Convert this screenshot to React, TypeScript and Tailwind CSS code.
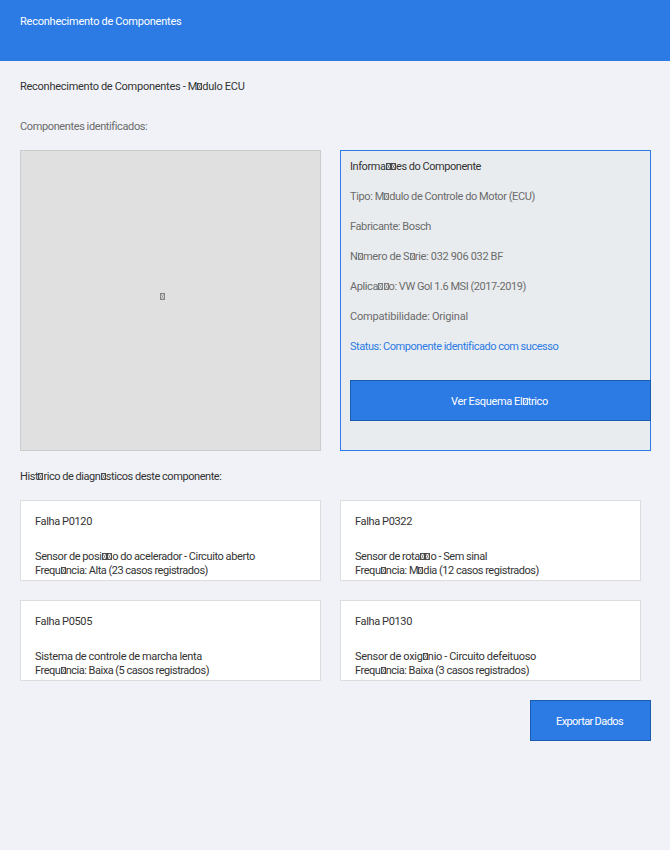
import { useLayoutEffect, useRef, useState } from "react";

// Placeholder box for a character the font has no glyph for.
function Tofu() {
  return (
    <svg width="5" height="7" viewBox="0 0 5 7" className="ml-[0.3px] inline-block align-baseline opacity-90" aria-hidden="true">
      <rect x="0.5" y="0.5" width="4" height="6" fill="none" stroke="currentColor" strokeWidth="0.95" />
      <path d="M1 1L4 6M4 1L1 6" stroke="currentColor" strokeWidth="0.75" opacity="0.8" />
    </svg>
  );
}

// One line of text whose tracking is adjusted to fill the given width.
function Line({ text, width, className = "" }: { text: string; width: number; className?: string }) {
  const ref = useRef<HTMLSpanElement>(null);
  const [tracking, setTracking] = useState(0);
  useLayoutEffect(() => {
    const letters = text.replaceAll("□", "").length;
    if (ref.current && letters > 0) {
      const natural = ref.current.getBoundingClientRect().width;
      setTracking((width - natural) / letters);
    }
  }, [text, width]);
  const parts = text.split("□");
  return (
    <div className={`h-[14px] whitespace-nowrap leading-[14px] ${className}`}>
      <span ref={ref} className="inline-block [word-spacing:-0.2px]" style={{ letterSpacing: `${tracking}px` }}>
        {parts.map((part, i) => (
          <span key={i}>
            {i > 0 && <Tofu />}
            {part}
          </span>
        ))}
      </span>
    </div>
  );
}

const details = [
  { text: "Tipo: M□dulo de Controle do Motor (ECU)", width: 185 },
  { text: "Fabricante: Bosch", width: 81 },
  { text: "N□mero de S□rie: 032 906 032 BF", width: 153 },
  { text: "Aplica□□o: VW Gol 1.6 MSI (2017-2019)", width: 176 },
  { text: "Compatibilidade: Original", width: 118 },
];

const faults = [
  { code: "Falha P0120", text: "Sensor de posi□□o do acelerador - Circuito aberto", w: 220, freq: "Frequ□ncia: Alta (23 casos registrados)", fw: 173 },
  { code: "Falha P0322", text: "Sensor de rota□□o - Sem sinal", w: 132, freq: "Frequ□ncia: M□dia (12 casos registrados)", fw: 184 },
  { code: "Falha P0505", text: "Sistema de controle de marcha lenta", w: 167, freq: "Frequ□ncia: Baixa (5 casos registrados)", fw: 174 },
  { code: "Falha P0130", text: "Sensor de oxig□nio - Circuito defeituoso", w: 181, freq: "Frequ□ncia: Baixa (3 casos registrados)", fw: 174 },
];

export default function App() {
  return (
    <div className="h-[850px] w-[670px] overflow-hidden bg-[#f0f2f7] font-[Roboto,'Liberation_Sans',sans-serif] text-[11px] text-[#333333]">
      <header className="h-[61px] bg-[#2c7be5] px-5 pt-[15px] text-white">
        <Line text="Reconhecimento de Componentes" width={161.5} />
      </header>
      <main className="px-5 pt-[19px]">
        <Line text="Reconhecimento de Componentes - M□dulo ECU" width={224.5} />
        <Line text="Componentes identificados:" width={127} className="mt-[26px] text-[#6b6b6b]" />
        <div className="mt-4 flex gap-[19px]">
          <div className="flex h-[301px] w-[301px] shrink-0 justify-center border border-[#cccccc] bg-[#e0e0e0] pt-[139px] pr-4 text-[#777777]">
            <Line text="□" width={5} />
          </div>
          <section className="h-[301px] w-[311px] shrink-0 border border-[#2c7be5] bg-[#e9ecef] pt-[9px] pl-[9px]">
            <Line text="Informa□□es do Componente" width={131} />
            <div className="mt-4 flex flex-col gap-4 text-[#6b6b6b]">
              {details.map((d) => (
                <Line key={d.text} {...d} />
              ))}
              <Line text="Status: Componente identificado com sucesso" width={208} className="text-[#2c7be5]" />
            </div>
            <button className="mt-[26px] flex h-[41px] w-[301px] justify-center border border-[#1a5cb0] bg-[#2c7be5] pt-[14px] pr-[2px] text-white">
              <Line text="Ver Esquema El□trico" width={97} />
            </button>
          </section>
        </div>
        <Line text="Hist□rico de diagn□sticos deste componente:" width={201.5} className="mt-[19px]" />
        <div className="mt-4 grid grid-cols-[301px_301px] gap-x-[19px] gap-y-[19px]">
          {faults.map((f) => (
            <article key={f.code} className="h-[81px] border border-[#dddddd] bg-white pt-[14px] pl-[14px]">
              <Line text={f.code} width={57} />
              <Line text={f.text} width={f.w} className="mt-[21px]" />
              <Line text={f.freq} width={f.fw} />
            </article>
          ))}
        </div>
        <button className="mt-[19px] ml-[510px] flex h-[41px] w-[121px] justify-center border border-[#1a5cb0] bg-[#2c7be5] pt-[14px] pr-0.5 text-white">
          <Line text="Exportar Dados" width={67} />
        </button>
      </main>
    </div>
  );
}
